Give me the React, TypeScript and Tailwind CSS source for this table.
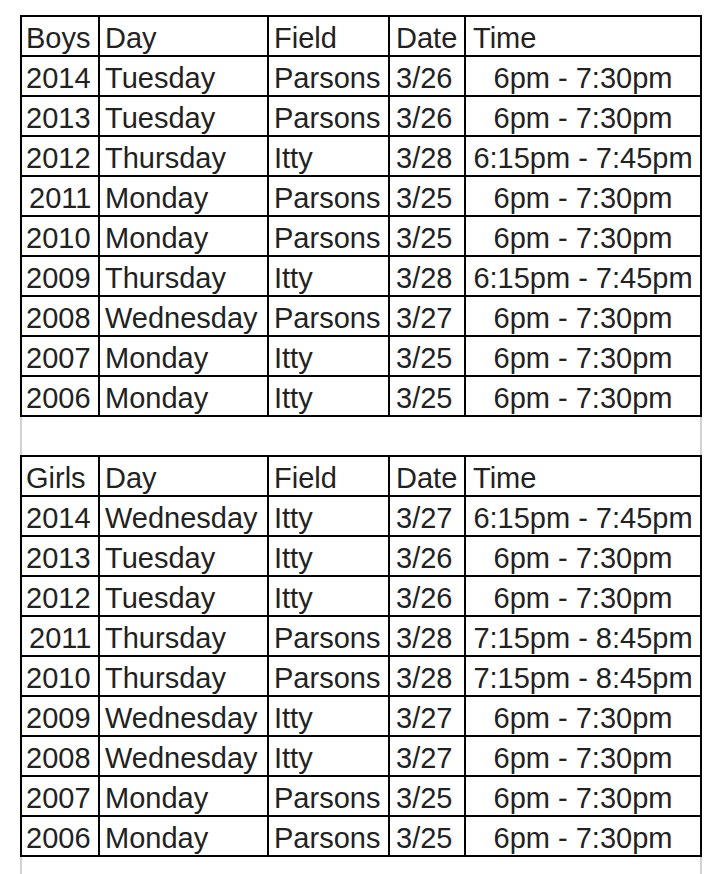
type Row = [string, string, string, string, string];

const boys: Row[] = [
  ["2014", "Tuesday", "Parsons", "3/26", "6pm - 7:30pm"],
  ["2013", "Tuesday", "Parsons", "3/26", "6pm - 7:30pm"],
  ["2012", "Thursday", "Itty", "3/28", "6:15pm - 7:45pm"],
  ["2011", "Monday", "Parsons", "3/25", "6pm - 7:30pm"],
  ["2010", "Monday", "Parsons", "3/25", "6pm - 7:30pm"],
  ["2009", "Thursday", "Itty", "3/28", "6:15pm - 7:45pm"],
  ["2008", "Wednesday", "Parsons", "3/27", "6pm - 7:30pm"],
  ["2007", "Monday", "Itty", "3/25", "6pm - 7:30pm"],
  ["2006", "Monday", "Itty", "3/25", "6pm - 7:30pm"],
];

const girls: Row[] = [
  ["2014", "Wednesday", "Itty", "3/27", "6:15pm - 7:45pm"],
  ["2013", "Tuesday", "Itty", "3/26", "6pm - 7:30pm"],
  ["2012", "Tuesday", "Itty", "3/26", "6pm - 7:30pm"],
  ["2011", "Thursday", "Parsons", "3/28", "7:15pm - 8:45pm"],
  ["2010", "Thursday", "Parsons", "3/28", "7:15pm - 8:45pm"],
  ["2009", "Wednesday", "Itty", "3/27", "6pm - 7:30pm"],
  ["2008", "Wednesday", "Itty", "3/27", "6pm - 7:30pm"],
  ["2007", "Monday", "Parsons", "3/25", "6pm - 7:30pm"],
  ["2006", "Monday", "Parsons", "3/25", "6pm - 7:30pm"],
];

const cell = "h-10 shrink-0 overflow-hidden whitespace-nowrap border-b-2 border-r-2 border-black pt-[6px] leading-[30px]";

function ScheduleRow({ row, header = false }: { row: Row; header?: boolean }) {
  const [year, day, field, date, time] = row;
  return (
    <div className="flex">
      <div className={`${cell} w-[78px] ${year === "2011" ? "pl-[7px]" : "pl-[4px]"}`}>{year}</div>
      <div className={`${cell} w-[169px] pl-[5px]`}>{day}</div>
      <div className={`${cell} w-[121px] pl-[5px]`}>{field}</div>
      <div className={`${cell} w-[76px] pl-[6px]`}>{date}</div>
      <div className={`${cell} w-[236px] ${header ? "pl-[7px] text-left" : "text-center"}`}>{time}</div>
    </div>
  );
}

function ScheduleTable({ label, rows }: { label: string; rows: Row[] }) {
  return (
    <div className="border-l-2 border-t-2 border-black">
      <ScheduleRow header row={[label, "Day", "Field", "Date", "Time"]} />
      {rows.map((row) => (
        <ScheduleRow key={row[0]} row={row} />
      ))}
    </div>
  );
}

export default function App() {
  return (
    <div
      className="min-h-[874px] bg-white pt-[15px] pl-[20px] text-[29px] text-[#222]"
      style={{ fontFamily: '"Liberation Sans", Arial, Helvetica, sans-serif' }}
    >
      <div className="flex w-[682px] flex-col">
        <ScheduleTable label="Boys" rows={boys} />
        <div className="h-[38px] border-x-2 border-[#d2d2d2]" />
        <ScheduleTable label="Girls" rows={girls} />
        <div className="h-[18px] border-x-2 border-[#d2d2d2]" />
      </div>
    </div>
  );
}
